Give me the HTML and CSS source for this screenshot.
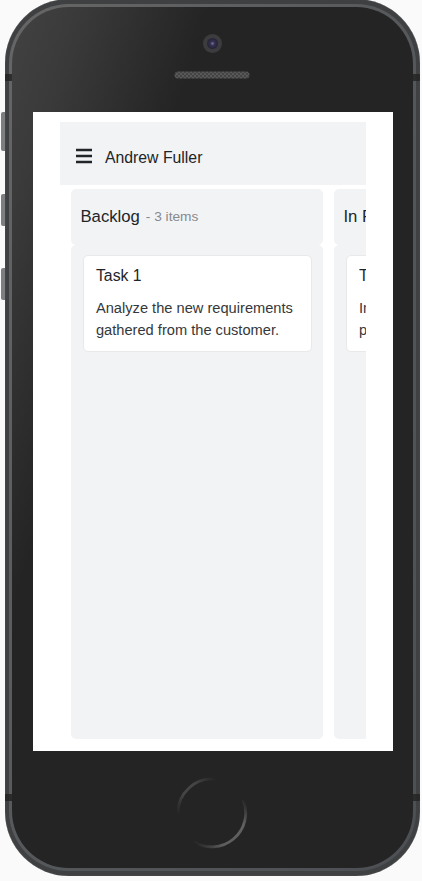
FILE: index.html
```html
<!DOCTYPE html>
<html lang="en">
<head>
<meta charset="utf-8">
<title>Kanban board</title>
<link rel="stylesheet" href="styles.css">
</head>
<body>
<div class="phone">
  <i class="key key-mute"></i><i class="key key-up"></i><i class="key key-down"></i>
  <i class="seam seam-tl"></i><i class="seam seam-tr"></i><i class="seam seam-bl"></i><i class="seam seam-br"></i>
  <div class="rim">
    <div class="face">
      <div class="top">
        <div class="camera"><i></i></div>
        <svg class="speaker" width="76" height="8" viewBox="0 0 76 8">
          <defs><pattern id="mesh" width="4" height="4" patternUnits="userSpaceOnUse"><rect width="4" height="4" fill="#444"/><circle cx="1" cy="1" r=".9" fill="#626262"/><circle cx="3" cy="3" r=".9" fill="#626262"/></pattern></defs>
          <rect x=".5" y=".5" width="75" height="7" rx="3.5" fill="url(#mesh)"/>
        </svg>
      </div>
      <main class="screen">
        <div class="app">
          <header class="bar">
            <svg width="16" height="16" viewBox="0 0 16 16"><path d="M0 2h16M0 8h16M0 14h16" stroke="#212529" stroke-width="2.5"/></svg>
            <span>Andrew Fuller</span>
          </header>
          <div class="board">
            <section class="column">
              <div class="column-head">Backlog<small>- 3 items</small></div>
              <div class="column-body">
                <article class="card"><h2>Task 1</h2><p>Analyze the new requirements gathered from the customer.</p></article>
              </div>
            </section>
            <section class="column">
              <div class="column-head">In Progress</div>
              <div class="column-body">
                <article class="card"><h2>Task 2</h2><p>Improve application<br>performance</p></article>
              </div>
            </section>
          </div>
        </div>
      </main>
      <div class="bottom">
        <svg width="72" height="72" viewBox="0 0 72 72" fill="none" stroke-width="2.8">
          <defs>
            <linearGradient id="a" gradientUnits="userSpaceOnUse" x1="2" y1="38" x2="40" y2="2"><stop offset="0" stop-color="#242424"/><stop offset=".35" stop-color="#454545"/><stop offset=".65" stop-color="#454545"/><stop offset="1" stop-color="#242424"/></linearGradient>
            <linearGradient id="b" gradientUnits="userSpaceOnUse" x1="18" y1="66" x2="68" y2="22"><stop offset="0" stop-color="#242424"/><stop offset=".3" stop-color="#5e5e5e"/><stop offset=".75" stop-color="#606060"/><stop offset="1" stop-color="#242424"/></linearGradient>
          </defs>
          <path d="M2 38A34 34 0 0 1 41 2.4" stroke="url(#a)"/>
          <path d="M17 64.3A34 34 0 0 0 67 22.6" stroke="url(#b)"/>
        </svg>
      </div>
    </div>
  </div>
</div>
</body>
</html>
```

FILE: styles.css
```css
* { box-sizing: border-box; }

body {
  margin: 0;
  height: 881px;
  overflow: hidden;
  background: #fafafa;
  color: #212529;
  font-family: "Liberation Sans", Arial, sans-serif;
}

.phone {
  position: relative;
  width: 415.5px;
  height: 876.5px;
  margin: -1px 0 0 4.7px;
  padding: 5px 4px;
  border-radius: 64px;
  background: #3f4042;
  box-shadow: inset 0 0 1px #777;
}

.rim {
  height: 866.5px;
  padding: 2.5px 3px 3px 3.5px;
  border-radius: 60px;
  background: linear-gradient(115deg, #666, #535659 60%, #4c4f53);
}

.face {
  height: 861px;
  padding: 0 20.2px;
  border-radius: 57px;
  background: linear-gradient(108deg, #424242 0, #3a3a3a 10%, #242424 29%);
}

.key {
  position: absolute;
  z-index: -1;
  left: -4px;
  width: 6px;
  border-radius: 2px 0 0 2px;
  background: #7d7e82;
}
.key-mute { top: 113px; height: 39px; }
.key-up { top: 195px; height: 32px; }
.key-down { top: 269px; height: 32px; }

.seam { position: absolute; width: 7.5px; height: 6.5px; background: #242424; opacity: .85; }
.seam-tl { top: 75px; left: .3px; }
.seam-tr { top: 75px; right: 0; }
.seam-bl { top: 795px; left: .3px; }
.seam-br { top: 795px; right: 0; }

.top {
  display: flex;
  flex-direction: column;
  align-items: center;
  height: 105.5px;
  padding: 27.5px .4px 0 0;
}

.camera {
  display: grid;
  place-items: center;
  width: 19px;
  height: 19px;
  margin-bottom: 17.5px;
  border-radius: 50%;
  background: #3c3c3e;
}
.camera i {
  width: 11px;
  height: 11px;
  border-radius: 50%;
  background: radial-gradient(circle, #77758c 0 8%, #39365b 20%, #29263d 55%, #242334 80%);
}

.speaker { display: block; }

.screen {
  width: 360px;
  height: 639px;
  margin-left: .6px;
  padding: 10px 27px 0;
  background: #fff;
}

.app { width: 306px; height: 617px; overflow: hidden; }

.bar {
  display: flex;
  align-items: center;
  gap: 13px;
  height: 63px;
  padding: 6px 16px 0;
  background: #f2f3f5;
  font-size: 15.8px;
}
.bar svg { margin-top: -2px; }
.bar span { padding-top: 2px; }

.board {
  display: flex;
  gap: 11px;
  width: 530px;
  padding: 4px 0 0 11px;
}

.column { flex: 0 0 252px; }

.column-head, .column-body {
  border-radius: 5px;
  background: #f2f3f5;
}

.column-head {
  display: flex;
  align-items: center;
  height: 56px;
  padding: 0 9.5px;
  font-size: 16.7px;
}
.column-head small { margin: -2px 0 0 6px; color: #86898d; font-size: 13.7px; }

.column-body { height: 494px; padding: 10px 11px 0 11.6px; }

.card {
  height: 97px;
  padding: 11px 12.4px;
  border: 1px solid #e7e9eb;
  border-radius: 5px;
  background: #fff;
}
.card h2 { margin: 0 0 12px; font-size: 15.8px; font-weight: 400; line-height: 18px; }
.card p { margin: 0; margin-right: -8px; font-size: 14.65px; line-height: 22px; color: #35383b; }

.bottom {
  display: flex;
  justify-content: center;
  padding: 26px 1px 0 0;
}
```
